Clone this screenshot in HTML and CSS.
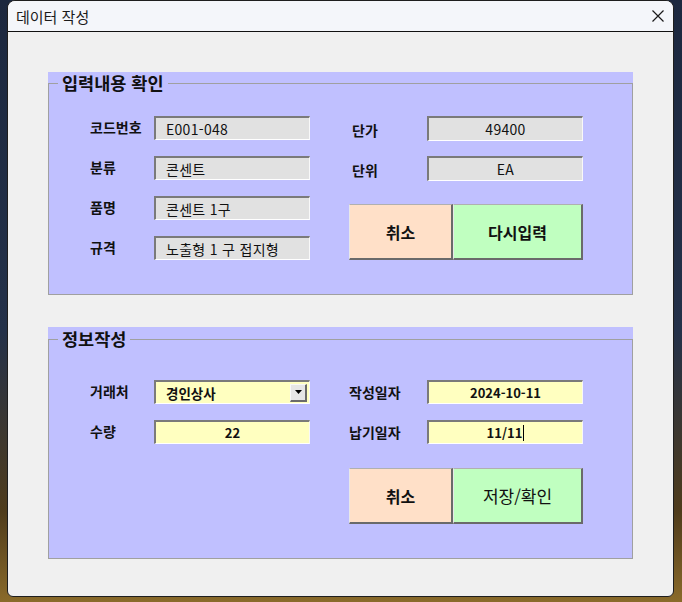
FILE: index.html
```html
<!DOCTYPE html>
<html lang="ko">
<head>
<meta charset="UTF-8">
<title>데이터 작성</title>
<link rel="stylesheet" href="styles.css">
</head>
<body>
<div class="window">
    <div class="titlebar">
        <span class="title">데이터 작성</span>
        <svg class="close" width="12" height="12" viewBox="0 0 12 12">
            <path d="M0.5 0.5 L11.5 11.5 M11.5 0.5 L0.5 11.5" stroke="#1a1a1a" stroke-width="1.2" fill="none"/>
        </svg>
    </div>
    <div class="client">
        <div class="frame frame-check">
            <fieldset>
                <legend>입력내용 확인</legend>
                <div class="cols">
                    <div class="col left">
                        <div class="row"><label>코드번호</label><div class="box grey">E001-048</div></div>
                        <div class="row"><label>분류</label><div class="box grey">콘센트</div></div>
                        <div class="row"><label>품명</label><div class="box grey">콘센트 1구</div></div>
                        <div class="row"><label>규격</label><div class="box grey">노출형 1 구 접지형</div></div>
                    </div>
                    <div class="col right">
                        <div class="row tall"><label class="shift">단가</label><div class="box grey center">49400</div></div>
                        <div class="row tall"><label class="shift">단위</label><div class="box grey center">EA</div></div>
                        <div class="buttons">
                            <button class="btn cancel">취소</button>
                            <button class="btn ok">다시입력</button>
                        </div>
                    </div>
                </div>
            </fieldset>
        </div>
        <div class="frame frame-write">
            <fieldset>
                <legend>정보작성</legend>
                <div class="cols">
                    <div class="col left">
                        <div class="row"><label>거래처</label>
                            <div class="box yellow combo">
                                <span class="combo-text">경인상사</span>
                                <span class="drop"><svg width="7" height="4" viewBox="0 0 7 4"><path d="M0 0 H7 L3.5 4 Z" fill="#000"/></svg></span>
                            </div>
                        </div>
                        <div class="row"><label>수량</label><div class="box yellow center bold">22</div></div>
                    </div>
                    <div class="col right">
                        <div class="row"><label>작성일자</label><div class="box yellow center bold">2024-10-11</div></div>
                        <div class="row"><label>납기일자</label><div class="box yellow center bold">11/11<span class="caret"></span></div></div>
                        <div class="buttons">
                            <button class="btn cancel">취소</button>
                            <button class="btn ok light">저장/확인</button>
                        </div>
                    </div>
                </div>
            </fieldset>
        </div>
    </div>
</div>
</body>
</html>
```

FILE: styles.css
```css
body, html {
    margin: 0;
    padding: 0;
    height: 100%;
    overflow: hidden;
    font-family: "Noto Sans CJK KR", "Liberation Sans", sans-serif;
}
body {
    background: linear-gradient(to bottom, #1c283f 0%, #243149 55%, #4f3c1c 85%, #8a6a2a 100%);
}
.window {
    margin-left: 7px;
    width: 665px;
    height: 595px;
    border: 1px solid #1e1e1e;
    border-radius: 8px 8px 6px 6px;
    background: #f0f0f0;
    overflow: hidden;
}
.titlebar {
    height: 30px;
    background: #f4f6fa;
    border-bottom: 1px solid #111;
    display: flex;
    align-items: center;
    justify-content: space-between;
    padding: 0 9px 0 8px;
}
.title {
    font-size: 15px;
    color: #1a1a1a;
}
.client {
    padding: 40px 40px 0 40px;
    display: flex;
    flex-direction: column;
    gap: 32px;
}
.frame {
    background: #c0c0ff;
}
.frame-check {
    height: 223px;
}
.frame-write {
    height: 232px;
}
fieldset {
    margin: 0;
    padding: 0 0 0 9px;
    border: 1px solid #a0a0a0;
    height: 100%;
    box-sizing: border-box;
    min-inline-size: 0;
}
legend {
    padding: 0 4px;
    font-size: 17.5px;
    font-weight: bold;
    line-height: 22px;
    color: #111;
}
.frame-write legend {
    line-height: 24px;
}
.cols {
    display: flex;
    gap: 39px;
    margin-left: 32px;
}
.frame-check .cols {
    padding-top: 22px;
}
.frame-write .cols {
    padding-top: 29px;
}
.col {
    display: flex;
    flex-direction: column;
    gap: 16px;
}
.col.right {
    width: 234px;
}
.frame-check .col.right {
    gap: 15px;
}
.row {
    display: flex;
    align-items: center;
    height: 24px;
}
.row.tall {
    height: 25px;
}
label {
    font-size: 14px;
    font-weight: bold;
    color: #111;
    line-height: 16px;
}
.left label {
    width: 64px;
    margin-top: -3px;
}
.right label {
    width: 78px;
}
.right label.shift {
    width: 75px;
    padding-left: 3px;
    margin-top: 3px;
}
.box {
    width: 156px;
    height: 100%;
    box-sizing: border-box;
    border-style: solid;
    border-width: 2px 1px 1px 2px;
    border-color: #7a7a7a #f8f8f8 #ffffff #7a7a7a;
    font-size: 13px;
    color: #111;
    display: flex;
    align-items: center;
    padding-left: 10px;
    line-height: 16px;
}
.grey {
    background: #e1e1e1;
    font-size: 14px;
    letter-spacing: 0.3px;
}
.yellow {
    background: #ffffc0;
}
.center {
    justify-content: center;
    padding-left: 0;
}
.bold {
    font-weight: bold;
}
.combo {
    padding-right: 2px;
    font-weight: bold;
    font-size: 13.5px;
}
.combo-text {
    flex: 1;
}
.drop {
    width: 17px;
    height: 18px;
    box-sizing: border-box;
    background: #e6e6e6;
    border-style: solid;
    border-width: 1px 2px 2px 1px;
    border-color: #f8f8f8 #6a6a6a #6a6a6a #f8f8f8;
    display: flex;
    align-items: center;
    justify-content: center;
}
.caret {
    display: inline-block;
    width: 1px;
    height: 16px;
    background: #000;
    margin-left: 1px;
}
.buttons {
    display: flex;
    height: 56px;
    margin-top: 8px;
}
.btn {
    height: 100%;
    box-sizing: border-box;
    border-style: solid;
    border-width: 1px 2px 2px 1px;
    border-color: #b0b0b0 #6a6a6a #6a6a6a #e8e8e8;
    font-family: "Noto Sans CJK KR", sans-serif;
    font-size: 16px;
    font-weight: bold;
    color: #111;
    padding: 0;
}
.cancel {
    width: 104px;
    background: #ffe0c8;
}
.ok {
    width: 130px;
    background: #c0ffc0;
}
.ok.light {
    font-weight: normal;
    font-size: 17px;
}
```
